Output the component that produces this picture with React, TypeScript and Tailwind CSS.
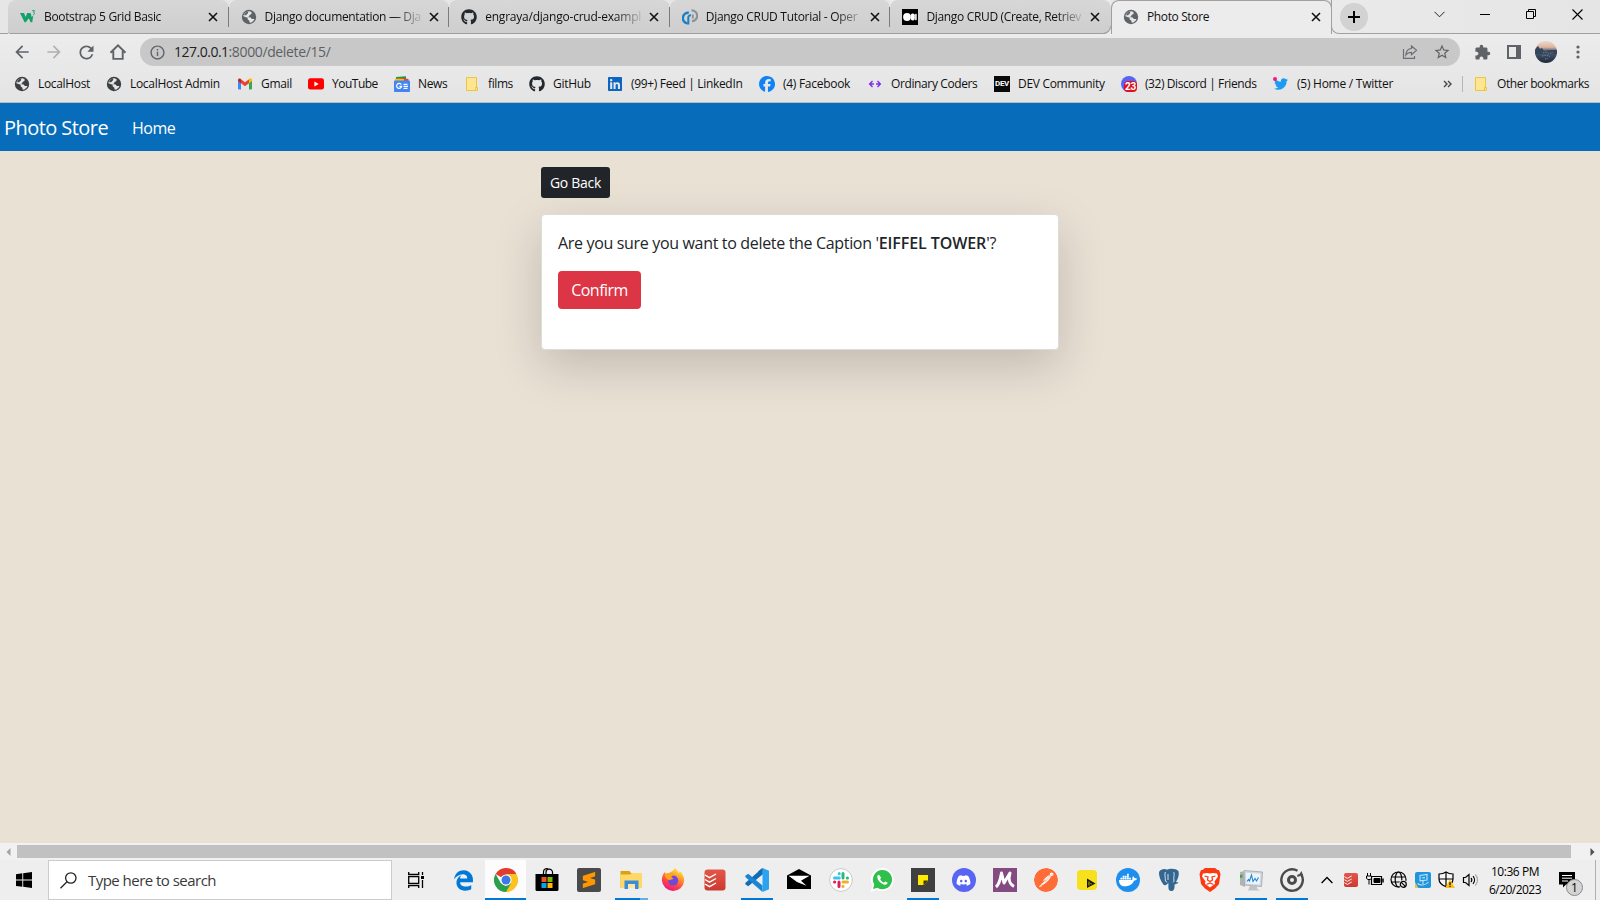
import React from "react";
import type { ReactNode } from "react";
import { FaGithub, FaDiscord, FaDocker, FaLinkedin, FaFacebook, FaTwitter, FaEdgeLegacy } from "react-icons/fa6";
import { MdExtension, MdStarBorder, MdInfoOutline, MdArrowBack, MdArrowForward, MdRefresh } from "react-icons/md";
import { SiPostman, SiSublimetext } from "react-icons/si";

/* ---------- small drawings ---------- */

const GlobeIcon = ({ color }: { color: string }) => (
  <svg width="16" height="16" viewBox="0 0 16 16">
    <circle cx="8" cy="8" r="7.200" fill={color} />
    <path d="M8.200 2.300L10.500 3v2L8.500 6l-.3 1.400-1.800.7 3.200.4 1.300 1.500h2.600c-.8 2-2.600 3.600-4.700 3.800l-.6-2.200-1.500-1.200V8.800L2.300 7.200C2.800 4.500 5.200 2.300 8.200 2.300z" fill="#e6e6e6" />
    <path d="M3 6.200C3.800 4 5.500 2.700 7.500 2.300L6.800 4.600 5 6.300z" fill={color} />
  </svg>
);

const W3Icon = () => (
  <svg width="16" height="16" viewBox="0 0 16 16" fill="#12a06b">
    <path d="M0 4h4l1.600 4L7.200 4h3.400l1.200 4.200 1.600-2.200-1.200 7.200h-1.600L8.800 9.200l-3 4H4.600z" />
    <path d="M12.200 1.600h2.400L13.400 3.200c1.600 0 1.600 2.400-.4 2.200" fill="none" stroke="#12a06b" strokeWidth=".9" />
  </svg>
);

const OpenReplayIcon = () => (
  <svg width="16" height="16" viewBox="0 0 16 16" fill="none">
    <path d="M9.500 1.400A5.200 5.200 0 1 1 10 12.200" stroke="#8b9198" strokeWidth="2.200" />
    <path d="M10.800 9.500V5.500" stroke="#8b9198" strokeWidth="1.800" />
    <path d="M6.800 3.800A5.300 5.300 0 0 0 5.600 14.400" stroke="#1c7fc7" strokeWidth="2.400" />
    <path d="M6.300 15.500V8.600C6.300 6.800 7.600 6.200 9 6.400" stroke="#1c7fc7" strokeWidth="2" />
  </svg>
);

const MediumIcon = () => (
  <svg width="16" height="16" viewBox="0 0 16 16">
    <rect width="16" height="16" fill="#000" />
    <circle cx="5" cy="8" r="3.900" fill="#fff" />
    <rect x="8.800" y="4.400" width="4" height="7.200" rx="1.800" fill="#fff" />
    <rect x="13" y="4.800" width="1.800" height="6.400" rx=".7" fill="#ddd" />
  </svg>
);

const GmailIcon = () => (
  <svg width="16" height="16" viewBox="0 0 16 16">
    <path d="M1 4v8.600c0 .5.4.9.9.9H4V6.800z" fill="#4285f4" />
    <path d="M12 6.800v6.700h2.100c.5 0 .9-.4.9-.9V4z" fill="#34a853" />
    <path d="M12 3.400v3.800l3-2.300V3.800c0-1.300-1.500-2-2.500-1.200z" fill="#fbbc04" />
    <path d="M4 7.200V3.200l4 3 4-3v4l-4 3z" fill="#ea4335" />
    <path d="M1 4v.9l3 2.300V3.200l-.5-.4C2.500 2 1 2.700 1 4z" fill="#c5221f" />
  </svg>
);

const YouTubeIcon = () => (
  <svg width="16" height="16" viewBox="0 0 16 16">
    <rect y="2.200" width="16" height="11.400" rx="2.400" fill="#f00" />
    <path d="M6.400 5.400v5l4.300-2.500z" fill="#fff" />
  </svg>
);

const NewsIcon = () => (
  <svg width="16" height="16" viewBox="0 0 16 16">
    <path d="M2 1l10-.8v3H2z" fill="#0c9d58" />
    <path d="M5 1.500l9.500 1.500v3H4z" fill="#ea4335" />
    <path d="M1 2.500l9 .5v3H1z" fill="#fbbc04" />
    <rect y="4.500" width="16" height="11.500" rx=".8" fill="#4285f4" />
    <path d="M7.300 8.600A2.500 2.500 0 1 0 7.600 10.400H5.400M9.500 8.300h4M9.500 10.300h4.500M9.500 12.300h4" fill="none" stroke="#fff" strokeWidth="1.200" />
  </svg>
);

const FolderIcon = () => (
  <svg width="16" height="16" viewBox="0 0 16 16">
    <path d="M2.500 1.500h10v9.500l1 1v2.500h-11z" fill="#fee591" stroke="#ecc63e" />
    <path d="M11.500 14v-2.500h2" fill="none" stroke="#ecc63e" />
  </svg>
);

const CodeArrowsIcon = () => (
  <svg width="16" height="16" viewBox="0 0 16 16" fill="none" stroke="#7c2bea" strokeWidth="1.300">
    <path d="M5.500 5L2.600 8l2.900 3M10.500 5l2.900 3-2.900 3M3 8h3.900M9.100 8H13" />
  </svg>
);

const DevIcon = () => (
  <span className="flex h-4 w-4 items-center justify-center bg-[#0a0a0a] font-['Roboto',sans-serif] text-[8px] leading-4 font-bold tracking-[-0.3px] text-white">
    DEV
  </span>
);

const DiscordBadgeIcon = () => (
  <span className="relative flex h-4 w-4 justify-center rounded-full bg-[#5865f2]">
    <span className="absolute top-[5px] left-[3px] flex h-[11px] w-[13px] items-center justify-center rounded-[4px] bg-[#e0101c] font-['Roboto',sans-serif] text-[10px] leading-[11px] font-bold tracking-[-0.3px] text-white">
      23
    </span>
  </span>
);

const TwitterBadgeIcon = () => (
  <span className="relative flex h-4 w-4 items-center justify-center">
    <FaTwitter size={14} color="#1d9bf0" />
    <span className="absolute top-[1px] left-0 h-1 w-1 rounded-full bg-[#f5197f]" />
  </span>
);

const HomeIcon = () => (
  <svg width="18" height="18" viewBox="0 0 18 18" fill="none" stroke="#5f6368" strokeWidth="1.900">
    <path d="M1.500 9.700L9 2.300l7.500 7.400M4.300 8v7.900h9.400V8" />
  </svg>
);

const ShareIcon = () => (
  <svg width="16" height="16" viewBox="0 0 16 16" fill="none" stroke="#6b6f73" strokeWidth="1.200">
    <path d="M1.500 5v9.400h11V12M9.500 2l5 4.300-5 4.300V8.300C6.500 8.300 5 9.300 3.800 11c.3-3.500 2.200-6.200 5.700-6.500z" />
  </svg>
);

const Avatar = () => (
  <svg width="22" height="22" viewBox="0 0 22 22">
    <defs>
      <linearGradient id="sky" x1="0" y1="0" x2="0" y2="1">
        <stop offset="0" stopColor="#e9d9d2" />
        <stop offset=".28" stopColor="#e2b49c" />
        <stop offset=".45" stopColor="#4d6078" />
        <stop offset="1" stopColor="#20293a" />
      </linearGradient>
      <clipPath id="round"><circle cx="11" cy="11" r="11" /></clipPath>
    </defs>
    <g clipPath="url(#round)">
      <rect width="22" height="22" fill="url(#sky)" />
      <path d="M0 8l3-3 2 3 2-1 2 3 6-1 7 0v4H0z" fill="#34465e" />
      <path d="M8 12l3-1 3 1.500 4-1M7 15l4-1 4 1.500M10 18l3-.5" stroke="#7f90a4" strokeWidth=".8" strokeDasharray="1.500 1" fill="none" />
    </g>
  </svg>
);

const ChromeIcon = () => (
  <svg width="24" height="24" viewBox="0 0 24 24">
    <path d="M12 12L1.600 6A12 12 0 0 1 22.400 6z" fill="#e33b2e" />
    <path d="M12 12L22.400 6A12 12 0 0 1 12 24z" fill="#fcc31e" />
    <path d="M1.600 6L6.800 15 12 18l5.200-3L12 24A12 12 0 0 1 1.600 6z" fill="#2b9f49" />
    <path d="M12 6h10.400L17.200 15z" fill="#fcc31e" />
    <circle cx="12" cy="12" r="5.600" fill="#fff" />
    <circle cx="12" cy="12" r="4.500" fill="#3b79e8" />
  </svg>
);

const StoreIcon = () => (
  <svg width="24" height="24" viewBox="0 0 24 24">
    <path d="M8.500 6V4a3.200 3.200 0 0 1 5-2.800A3.200 3.200 0 0 1 17.500 4v2M11 6V4.500A3.200 3.200 0 0 1 13.500 1.200" fill="none" stroke="#000" strokeWidth="1.200" />
    <path d="M.500 6h23v15.500a1.500 1.500 0 0 1-1.500 1.500H2a1.500 1.500 0 0 1-1.500-1.500z" fill="#000" />
    <path d="M6.500 9h5v5h-5z" fill="#f25022" />
    <path d="M12.500 9h5v5h-5z" fill="#7fba00" />
    <path d="M6.500 15h5v5h-5z" fill="#00a4ef" />
    <path d="M12.500 15h5v5h-5z" fill="#ffb900" />
  </svg>
);

const ExplorerIcon = () => (
  <svg width="24" height="24" viewBox="0 0 24 24">
    <path d="M1.500 3h9l1.500 2H22a1 1 0 0 1 1 1v14H1.500z" fill="#dda10f" />
    <path d="M1.500 6.500h9.500l2-1.500h10v15h-21.500z" fill="#ffd968" />
    <path d="M5.500 12.500h14v8.500h-3.500v-5h-7v5H5.500z" fill="#3a8dd8" />
    <path d="M9 16h7v4H9z" fill="#fbe6a4" />
  </svg>
);

const FirefoxIcon = () => (
  <svg width="24" height="24" viewBox="0 0 24 24">
    <defs>
      <linearGradient id="ff" x1=".8" y1="0" x2=".3" y2="1">
        <stop offset="0" stopColor="#fff44f" />
        <stop offset=".35" stopColor="#ffa02a" />
        <stop offset=".7" stopColor="#ff3f4b" />
        <stop offset="1" stopColor="#e01b88" />
      </linearGradient>
    </defs>
    <path d="M14 0c2 1.500 3.200 3.300 3.500 5 1-.3 1.200-1.500 1.100-2.300C21.700 5.500 23.400 9 23.200 13A11.200 11.200 0 0 1 .9 12.500C.8 8.800 2 6 4 3.800c0 1 .2 1.600.6 2.100 1-.6 2.300-.8 3.400-.6C9 4.200 10 3.600 11 3.400 11.800 2.500 13.200 1.500 14 0z" fill="url(#ff)" />
    <circle cx="12.200" cy="12.600" r="5" fill="#7147d6" />
    <path d="M4 5.700C6 4.800 8.500 5 9.600 6.200c1 .1 2.400.4 3.400 1.300-1.600 0-2.500.8-2.800 1.700 1 .3 1.900.9 2.300 1.800-1.600.6-3 .2-4.200 1.200-2.200-1.600-4.800-2-4.300-6.500z" fill="#ffa31a" />
  </svg>
);

const TodoistIcon = ({ size }: { size: number }) => (
  <svg width={size} height={size} viewBox="0 0 24 24">
    <defs>
      <linearGradient id="todo" x1="0" y1="0" x2="0" y2="1">
        <stop offset="0" stopColor="#e3564a" />
        <stop offset="1" stopColor="#cb3a30" />
      </linearGradient>
    </defs>
    <rect x="1.500" y="1.500" width="21" height="21" rx="3" fill="url(#todo)" />
    <path d="M2 7l4.500 2.600L13 6M2 11.500l4.500 2.600L13 10.500M2 16l4.500 2.600 6.500-3.600" fill="none" stroke="#fff" strokeWidth="1.400" />
  </svg>
);

const VsCodeIcon = () => (
  <svg width="24" height="24" viewBox="0 0 24 24">
    <path d="M17.500 0v6.500L3.200 18.300.300 16.200V15z" fill="#0f6cb8" />
    <path d="M17.500 24v-6.500L3.200 5.700.300 7.800V9z" fill="#1a85d3" />
    <path d="M17.500 0L24 2.800v18.400L17.500 24z" fill="#2ba3ee" />
    <path d="M17.500 0L13 3.600l4.500 3z" fill="#0f6cb8" />
  </svg>
);

const MailIcon = () => (
  <svg width="24" height="20" viewBox="0 0 24 20">
    <path d="M0 6.500L12 0l12 6.500V20H0z" fill="#000" />
    <path d="M1.500 6.700h21l-8.500 5 5.500 5L10 13z" fill="#fff" />
  </svg>
);

const SlackIcon = () => (
  <svg width="24" height="24" viewBox="0 0 24 24" strokeLinecap="round" strokeWidth="3">
    <circle cx="12" cy="12" r="11.400" fill="#fff" stroke="#c9c9c9" strokeWidth="1" />
    <path d="M10.200 5.500v.2M5.500 10h4.700" stroke="#36c5f0" />
    <path d="M14 5.500V10M18.500 10h-.2" stroke="#2eb67d" />
    <path d="M14 14h4.500M14 18.500v-.2" stroke="#ecb22e" />
    <path d="M10 14v4.500M5.700 14h-.2" stroke="#e01e5a" />
  </svg>
);

const WhatsAppIcon = () => (
  <svg width="24" height="24" viewBox="0 0 24 24">
    <path d="M12.500 0A11.500 11.500 0 1 1 7 21.800L.500 24l2-6.600A11.500 11.500 0 0 1 12.500 0z" fill="#fff" />
    <path d="M12.500 2A9.600 9.600 0 1 1 7.300 19.700L3 21l1.300-4.400A9.600 9.600 0 0 1 12.500 2z" fill="#2fbf4b" />
    <path d="M9 6.800c-1.200 0-2 1.300-1.700 2.800.7 3.500 4 6.700 7.700 7.200 1.500.1 2.700-1 2.600-2.200L15.200 13.400l-1.300 1.400c-1.800-.7-3-1.900-3.800-3.700L11.200 9.700z" fill="#fff" />
  </svg>
);

const NotesIcon = () => (
  <svg width="24" height="24" viewBox="0 0 24 24">
    <path d="M0 0h24v24H0z" fill="#404040" />
    <path d="M7 7h10v6l-4 4H7z" fill="#ffe900" />
    <path d="M12.500 12.500H17V13l-4 4h-.5z" fill="#403a08" />
  </svg>
);

const ScriptMIcon = () => (
  <svg width="24" height="24" viewBox="0 0 24 24">
    <path d="M0 0h24v24H0z" fill="#844a82" />
    <path d="M3 19C5.500 17 7.500 11 8.500 5L11 15l6-10C15.500 10 16 16 21 18.500" fill="none" stroke="#fff" strokeWidth="3" strokeLinejoin="round" />
  </svg>
);

const YellowPlayIcon = () => (
  <svg width="24" height="24" viewBox="0 0 24 24">
    <rect x="2" y="2" width="20" height="20" rx="4" fill="#f7e01e" />
    <path d="M12 10.500v9.500l8.500-4.500z" fill="#181500" />
    <path d="M14 13.500v4M16 15v1.500" stroke="#f7e01e" strokeWidth=".8" />
  </svg>
);

const ElephantIcon = () => (
  <svg width="24" height="24" viewBox="0 0 24 24" fill="#336791">
    <path d="M2 4c2-3 5.500-3.500 8-2.300C13 .3 19 .2 21.500 3.200c1 4-.8 8-2.500 11h2.500c-.8 1.500-2.500 2-3.900 2-.1 3 .2 6-2.600 6.800-2.500.5-3.500-1-3.600-3.500V15c-1.600 2-3.800 3.200-5.400 1C3.500 12.500 1.700 8 2 4z" />
    <path d="M8.300 4c-1 3 .3 6 .1 9l1.800 1.300M16.800 4.200c1 3-.6 5 .2 9l-1 1.200M11 6v6" fill="none" stroke="#e6edf3" strokeWidth=".9" />
  </svg>
);

const BraveIcon = () => (
  <svg width="22" height="24" viewBox="0 0 22 24">
    <path d="M6 0h10l2.500 2H20l1.500 4L20 16l-4 4.500L11 24l-5-3.500L2 16 .500 6 2 2h1.500z" fill="#fb3a12" />
    <path d="M4 5.500l4-.5 3 .6 3-.6 4 .5 1 3-3.500 5 .5 2.500-3 2-2 1.500-2-1.500-3-2 .5-2.500L3 8.500z" fill="#fff" />
    <path d="M5.500 8l3.500 1-.5 3 2.500 1.500 2.500-1.500-.5-3 3.500-1M7.500 16.500L11 15l3.500 1.500" fill="none" stroke="#fb3a12" strokeWidth="1.300" />
  </svg>
);

const MonitorIcon = () => (
  <svg width="24" height="24" viewBox="0 0 24 24">
    <path d="M1 4l5-1V19l-5-2z" fill="#aeb3b6" />
    <path d="M1 7l2.500-.5v3L1 10z" fill="#46a33c" />
    <path d="M5 2.500l18.500 1.500-1 14.500-17-1.500z" fill="#d3d6d8" stroke="#a2a6a9" strokeWidth=".8" />
    <path d="M7 4.700l14.500 1-.8 10.800L7.200 15.500z" fill="#e9f5ff" />
    <path d="M8 13.500l1.500-2 1 1.500 2-6 1.500 6.500 2-3 1.500 2.500 2-3.500" fill="none" stroke="#2584cf" strokeWidth="1.100" />
    <path d="M11 17.800h7v3l3 1.700H9z" fill="#bfc3c5" />
  </svg>
);

const GrooveIcon = () => (
  <svg width="24" height="24" viewBox="0 0 24 24" fill="none" stroke="#4b4b4b">
    <path d="M21.500 7A10.700 10.700 0 1 1 17.500 2.800" strokeWidth="2.400" />
    <circle cx="12" cy="12" r="3.500" strokeWidth="3" />
    <path d="M17.300 7.600c1.400.2 3-.5 3.900-2.100L22.300 8" strokeWidth="2.200" />
  </svg>
);

const BatteryIcon = () => (
  <svg width="18" height="14" viewBox="0 0 18 14" fill="none" stroke="#000">
    <path d="M5.500 3.500h10v8h-10z" strokeWidth="1.200" />
    <path d="M8 5.500h6v4H8z" fill="#000" />
    <path d="M17 5.500v4" strokeWidth="1.500" />
    <path d="M1.500 0v3M4.500 0v3M.500 3h5v2.500l-1.500 1h-2L.500 5.500zM3 6.500v5" fill="#eee" />
  </svg>
);

const GlobeOffIcon = () => (
  <svg width="18" height="18" viewBox="0 0 18 18" fill="none" stroke="#000" strokeWidth="1.200">
    <circle cx="8.500" cy="8.500" r="7.500" />
    <ellipse cx="8.500" cy="8.500" rx="3.300" ry="7.500" />
    <path d="M1.500 6h14M1.500 11h14" />
    <circle cx="13.300" cy="13.300" r="4.300" fill="#eee" stroke="none" />
    <circle cx="13.300" cy="13.300" r="3" />
    <path d="M11.300 11.300l4 4" />
  </svg>
);

const BlueToolIcon = () => (
  <svg width="16" height="16" viewBox="0 0 16 16" fill="none">
    <rect width="16" height="16" rx="2" fill="#2094dc" />
    <path d="M5 3.500l7-1v5.500l-7 .8zM7 6l3-.4M2.500 11.500c3 2.500 8 2 11-1.500M8 9v3" stroke="#bfe3fa" strokeWidth="1.100" />
    <path d="M0 10l3.500 6H1a1 1 0 0 1-1-1z" fill="#e3c06a" />
  </svg>
);

const ShieldIcon = () => (
  <svg width="18" height="18" viewBox="0 0 18 18">
    <path d="M8 1C6 2.400 3.500 3 1 3v5C1 11.700 4 14.200 8 15.700c4-1.500 7-4 7-7.700V3C12.500 3 10 2.400 8 1zM8 1v14M1 8h14" fill="#f7f7f7" stroke="#000" strokeWidth="1.200" />
    <path d="M12 8.500l5 8.500H7z" fill="#fdbf12" />
    <path d="M12 11.200v3M12 15v1" stroke="#000" strokeWidth="1.200" />
  </svg>
);

const SpeakerIcon = () => (
  <svg width="18" height="16" viewBox="0 0 18 16" fill="none" stroke="#000" strokeWidth="1.200">
    <path d="M1.500 5.500h2L7 2.500v11l-3.500-3h-2z" />
    <path d="M9 6c1 1.200 1 2.800 0 4M11 4.200c2 2.200 2 5.400 0 7.600" />
    <path d="M13.300 2.500c3 3 3 8 0 11" stroke="#aaa" />
  </svg>
);

/* ---------- browser: tab strip ---------- */

type Tab = { title: string; icon: ReactNode; tracking: string };

const tabs: Tab[] = [
  { title: "Bootstrap 5 Grid Basic", icon: <W3Icon />, tracking: "tracking-[-0.34px]" },
  { title: "Django documentation — Dja", icon: <GlobeIcon color="#5f6368" />, tracking: "tracking-[-0.34px]" },
  { title: "engraya/django-crud-exampl", icon: <FaGithub size={16} color="#24292f" />, tracking: "tracking-[-0.22px]" },
  { title: "Django CRUD Tutorial - Oper", icon: <OpenReplayIcon />, tracking: "tracking-[-0.3px]" },
  { title: "Django CRUD (Create, Retriev", icon: <MediumIcon />, tracking: "tracking-[-0.33px]" },
];

const TabClose = () => (
  <svg width="10" height="10" viewBox="0 0 10 10" stroke="#111" strokeWidth="1.600" className="shrink-0">
    <path d="M1 1l8 8M9 1L1 9" />
  </svg>
);

function InactiveTab({ tab, first, last }: { tab: Tab; first: boolean; last: boolean }) {
  return (
    <div className={last ? "relative flex h-[34px] w-[220.600px] bg-[#ececec]" : "relative flex h-[34px] w-[220.600px]"}>
      <div
        className={
          "flex min-w-0 flex-1 items-center rounded-t-lg border-b border-[#a0a0a0] bg-linear-to-b from-[#d7d7d7] to-[#cecece] pl-[12px]" +
          (last ? " rounded-br-lg" : "") +
          (first ? " rounded-bl-[3px]" : "")
        }
      >
        <span className="flex h-4 w-4 items-center justify-center">{tab.icon}</span>
        <span
          className={
            "ml-2 w-[160px] leading-[18px] whitespace-nowrap [mask-image:linear-gradient(to_right,#000_130px,transparent_160px)] " +
            tab.tracking
          }
        >
          {tab.title}
        </span>
        <span className="ml-1 flex"><TabClose /></span>
      </div>
      {last ? (
        <span className="absolute right-0 bottom-0 h-2 w-2 rounded-br-lg border-r border-b border-[#a0a0a0]" />
      ) : (
        <span className="absolute top-[7px] right-0 h-5 w-px bg-[#7c7c7c]" />
      )}
    </div>
  );
}

function TabStrip() {
  return (
    <div className="flex h-[34px] bg-[#e6e6e6]">
      <div className="w-2 border-b border-[#a0a0a0]" />
      {tabs.map((t, i) => (
        <InactiveTab key={t.title} tab={t} first={i === 0} last={i === tabs.length - 1} />
      ))}
      <div className="flex w-[221px] items-center rounded-t-lg border-x border-t border-[#a0a0a0] bg-[#ececec] pb-px pl-[11px]">
        <span className="flex h-4 w-4 items-center justify-center"><GlobeIcon color="#5f6368" /></span>
        <span className="ml-2 w-[159px] leading-[18px] tracking-[-0.37px]">Photo Store</span>
        <span className="ml-[5px] flex"><TabClose /></span>
      </div>
      <div className="flex flex-1 bg-[#ececec]">
        <div className="-ml-px flex flex-1 rounded-bl-lg border-b border-l border-[#a0a0a0] bg-linear-to-r from-[#eaeaea] to-[#e5e5e5]">
          <div className="mt-[3px] ml-2 flex h-7 w-7 items-center justify-center rounded-full bg-[#d2d2d2]">
            <svg width="12" height="12" viewBox="0 0 12 12" stroke="#000" strokeWidth="2"><path d="M6 0v12M0 6h12" /></svg>
          </div>
          <div className="ml-auto flex h-7">
            <span className="flex w-[46px] items-center justify-center">
              <svg width="11" height="7" viewBox="0 0 11 7" fill="none" stroke="#222"><path d="M.500 .800l5 5 5-5" /></svg>
            </span>
            <span className="flex w-[46px] items-center justify-center"><span className="h-px w-[10px] bg-black" /></span>
            <span className="flex w-[46px] items-center justify-center">
              <svg width="10" height="10" viewBox="0 0 10 10" fill="none" stroke="#000"><path d="M.500 2.500h7v7h-7zM2.500 2.500v-2h7v7h-2" /></svg>
            </span>
            <span className="flex w-[46px] items-center justify-center">
              <svg width="11" height="11" viewBox="0 0 11 11" stroke="#000" strokeWidth="1.100"><path d="M.500 .500l10 10M10.500 .500l-10 10" /></svg>
            </span>
          </div>
        </div>
      </div>
    </div>
  );
}

/* ---------- browser: toolbar ---------- */

const Slot = ({ children }: { children: ReactNode }) => (
  <span className="flex w-8 shrink-0 items-center justify-center">{children}</span>
);

function Toolbar() {
  return (
    <div className="flex h-9 items-center bg-linear-to-b from-[#ececec] to-[#e8e8e8] pl-[6px]">
      <Slot><MdArrowBack size={20} color="#5f6368" /></Slot>
      <Slot><MdArrowForward size={20} color="#b1b1b1" /></Slot>
      <Slot><MdRefresh size={21} color="#5f6368" /></Slot>
      <Slot><HomeIcon /></Slot>
      <div className="ml-[6px] flex h-7 w-[1320px] items-center rounded-full bg-[#c8c8c8] pr-[2px] pl-[9px]">
        <MdInfoOutline size={17} color="#5f6368" />
        <span className="ml-2 text-[14px] leading-5 tracking-[-0.370px] text-[#5c5f63]">
          <span className="tracking-[-0.500px] text-[#222]">127.0.0.1</span>:8000/delete/15/
        </span>
        <span className="ml-auto flex">
          <Slot><ShareIcon /></Slot>
          <Slot><MdStarBorder size={18} color="#5f6368" /></Slot>
        </span>
      </div>
      <div className="ml-[6px] flex">
        <Slot><MdExtension size={17} color="#5f6368" /></Slot>
        <Slot>
          <svg width="14" height="14" viewBox="0 0 14 14"><path d="M1 1h12v12H1z" fill="none" stroke="#5f6368" strokeWidth="2" /><path d="M9 0h5v14H9z" fill="#5f6368" /></svg>
        </Slot>
        <Slot><Avatar /></Slot>
        <Slot>
          <svg width="4" height="14" viewBox="0 0 4 14" fill="#5f6368"><circle cx="2" cy="2" r="1.600" /><circle cx="2" cy="7" r="1.600" /><circle cx="2" cy="12" r="1.600" /></svg>
        </Slot>
      </div>
    </div>
  );
}

/* ---------- browser: bookmarks ---------- */

type Bookmark = { label: string; icon: ReactNode; fit: string };

const bookmarks: Bookmark[] = [
  { label: "LocalHost", icon: <GlobeIcon color="#3c4043" />, fit: "w-[52px] tracking-[-0.33px]" },
  { label: "LocalHost Admin", icon: <GlobeIcon color="#3c4043" />, fit: "w-[91px] tracking-[-0.31px]" },
  { label: "Gmail", icon: <GmailIcon />, fit: "w-[31px] tracking-[-0.3px]" },
  { label: "YouTube", icon: <YouTubeIcon />, fit: "w-[46px] tracking-[-0.5px]" },
  { label: "News", icon: <NewsIcon />, fit: "w-[30px] tracking-[-0.35px]" },
  { label: "films", icon: <FolderIcon />, fit: "w-[25px] tracking-[-0.4px]" },
  { label: "GitHub", icon: <FaGithub size={16} color="#24292f" />, fit: "w-[38px] tracking-[-0.3px]" },
  { label: "(99+) Feed | LinkedIn", icon: <FaLinkedin size={16} color="#0a66c2" />, fit: "w-[112px] tracking-[-0.33px]" },
  { label: "(4) Facebook", icon: <FaFacebook size={16} color="#0f82f5" />, fit: "w-[68px] tracking-[-0.28px]" },
  { label: "Ordinary Coders", icon: <CodeArrowsIcon />, fit: "w-[87px] tracking-[-0.38px]" },
  { label: "DEV Community", icon: <DevIcon />, fit: "w-[87px] tracking-[-0.3px]" },
  { label: "(32) Discord | Friends", icon: <DiscordBadgeIcon />, fit: "w-[112px] tracking-[-0.42px]" },
  { label: "(5) Home / Twitter", icon: <TwitterBadgeIcon />, fit: "w-[97px] tracking-[-0.25px]" },
];

const BookmarkItem = ({ b }: { b: Bookmark }) => (
  <span className="flex shrink-0 items-center gap-2">
    <span className="flex h-4 w-4 items-center justify-center">{b.icon}</span>
    <span className={"leading-[18px] whitespace-nowrap " + b.fit}>{b.label}</span>
  </span>
);

function BookmarksBar() {
  return (
    <div className="flex h-[33px] items-center gap-4 border-b border-[#bdbdbd] bg-linear-to-b from-[#e8e8e8] to-[#e4e4e4] pr-[11px] pb-1 pl-[14px]">
      {bookmarks.map((b) => <BookmarkItem key={b.label} b={b} />)}
      <span className="ml-auto flex items-center">
        <svg width="9" height="8" viewBox="0 0 9 8" fill="none" stroke="#444" strokeWidth="1.400"><path d="M1 1l3 3-3 3M5 1l3 3-3 3" /></svg>
        <span className="mr-[10px] ml-[10px] h-4 w-px bg-[#b5b5b5]" />
        <BookmarkItem b={{ label: "Other bookmarks", icon: <FolderIcon />, fit: "w-[92px] tracking-[-0.43px]" }} />
      </span>
    </div>
  );
}

/* ---------- page ---------- */

function PageContent() {
  return (
    <div className="flex flex-1 flex-col bg-[#eae1d5]">
      <nav className="flex h-12 items-center bg-[#076dbb] pt-px pl-1 text-white">
        <span className="w-[128px] text-[20px] leading-7 tracking-[-0.560px]">Photo Store</span>
        <span className="text-[16px] leading-6 tracking-[-0.500px]">Home</span>
      </nav>
      <main className="mx-auto flex w-[518px] flex-col items-start pt-4">
        <button className="mb-4 h-[31px] w-[69px] rounded-[3px] bg-[#212529] text-[14px] leading-[21px] tracking-[-0.300px] text-white">Go Back</button>
        <section className="h-[136px] w-full rounded border border-[#dcdcdc] bg-white p-4 text-[16px] leading-6 text-[#212529] shadow-[0_16px_48px_rgba(0,0,0,0.175)]">
          <p className="mb-4 tracking-[-0.330px] whitespace-nowrap">
            Are you sure you want to delete the Caption '
            <b className="font-semibold tracking-[-0.080px]">EIFFEL TOWER</b>'?
          </p>
          <button className="h-[38px] w-[83px] rounded bg-[#dc3545] tracking-[-0.550px] text-white">Confirm</button>
        </section>
      </main>
    </div>
  );
}

function HorizontalScrollbar() {
  return (
    <div className="flex h-[17px] items-center bg-[#f1f1f1]">
      <span className="flex w-[17px] justify-center">
        <svg width="5" height="8" viewBox="0 0 5 8" fill="#a3a3a3"><path d="M4.500 0v8L.500 4z" /></svg>
      </span>
      <span className="h-[13px] w-[1554px] bg-[#c1c1c1]" />
      <span className="ml-auto flex w-4 justify-center">
        <svg width="5" height="8" viewBox="0 0 5 8" fill="#505050"><path d="M.500 0v8l4-4z" /></svg>
      </span>
    </div>
  );
}

/* ---------- desktop taskbar ---------- */

type TaskApp = { name: string; icon: ReactNode; open?: "wide" | "normal" | "stack"; current?: boolean };

const Disc = ({ color, children }: { color: string; children: ReactNode }) => (
  <span className={"flex h-6 w-6 items-center justify-center rounded-full " + color}>{children}</span>
);

const pinned: TaskApp[] = [
  { name: "edge", icon: <FaEdgeLegacy size={21} color="#0078d7" /> },
  { name: "chrome", icon: <ChromeIcon />, open: "wide", current: true },
  { name: "store", icon: <StoreIcon /> },
  { name: "sublime", icon: <span className="flex h-6 w-6 items-center justify-center rounded-[2px] bg-[#4a4a4a]"><SiSublimetext size={16} color="#ff9800" /></span> },
  { name: "explorer", icon: <ExplorerIcon />, open: "stack" },
  { name: "firefox", icon: <FirefoxIcon /> },
  { name: "todoist", icon: <TodoistIcon size={24} /> },
  { name: "code", icon: <VsCodeIcon />, open: "normal" },
  { name: "mail", icon: <span className="mb-[3px] flex"><MailIcon /></span> },
  { name: "slack", icon: <SlackIcon /> },
];

const pinnedMore: TaskApp[] = [
  { name: "whatsapp", icon: <WhatsAppIcon /> },
  { name: "notes", icon: <NotesIcon />, open: "normal" },
  { name: "discord", icon: <Disc color="bg-[#5865f2]"><FaDiscord size={15} color="#fff" /></Disc> },
  { name: "script", icon: <ScriptMIcon /> },
  { name: "postman", icon: <SiPostman size={24} color="#ff6c37" className="rounded-full bg-white" /> },
  { name: "player", icon: <YellowPlayIcon /> },
  { name: "docker", icon: <Disc color="bg-[#1d8fee]"><FaDocker size={18} color="#fff" /></Disc> },
  { name: "postgres", icon: <ElephantIcon /> },
  { name: "brave", icon: <BraveIcon /> },
  { name: "monitor", icon: <MonitorIcon />, open: "normal" },
  { name: "groove", icon: <GrooveIcon />, open: "normal" },
];

function TaskButton({ app, width }: { app: TaskApp; width: string }) {
  return (
    <div className={"flex h-10 flex-col items-center justify-between " + width + (app.current ? " bg-[#fcfcfc]" : "")}>
      <span className="flex h-[38px] items-center pt-[2px]">{app.icon}</span>
      {app.open === "wide" && <span className="h-[2px] w-full bg-[#0078d7]" />}
      {app.open === "normal" && <span className="h-[2px] w-8 bg-[#0078d7]" />}
      {app.open === "stack" && (
        <span className="flex h-[2px] w-[33px]"><span className="flex-1 bg-[#0078d7]" /><span className="w-2 bg-[#66aee7]" /></span>
      )}
    </div>
  );
}

const tray: [string, ReactNode][] = [
  ["more", <svg width="12" height="8" viewBox="0 0 12 8" fill="none" stroke="#000" strokeWidth="1.300"><path d="M.600 7L6 1.500 11.400 7" /></svg>],
  ["todoist", <TodoistIcon size={16} />],
  ["battery", <BatteryIcon />],
  ["network", <GlobeOffIcon />],
  ["tool", <BlueToolIcon />],
  ["shield", <ShieldIcon />],
  ["sound", <SpeakerIcon />],
];

function Taskbar() {
  return (
    <div className="flex h-10 bg-[#eeeeee]">
      <span className="flex w-12 items-center justify-center">
        <svg width="16" height="16" viewBox="0 0 16 16" fill="#000"><path d="M0 2.200L6.300 1.300V7.600H0zM7.200 1.200L16 0V7.600H7.200zM0 8.500h6.300v6.300L0 13.900zM7.200 8.500H16V16l-8.800-1.200z" /></svg>
      </span>
      <div className="flex w-[344px] items-center border border-[#cccccc] bg-white pl-[11px]">
        <svg width="17" height="17" viewBox="0 0 17 17" fill="none" stroke="#222" strokeWidth="1.300"><circle cx="10.800" cy="6" r="5.200" /><path d="M7 9.800L.500 16.300" /></svg>
        <span className="ml-[11px] text-[15px] leading-5 tracking-[-0.530px] text-[#3a3a3a]">Type here to search</span>
      </div>
      <span className="flex w-[50px] items-center pl-4">
        <svg width="16" height="16" viewBox="0 0 16 16" fill="none" stroke="#000" strokeWidth="1.300"><path d="M.700 0v2.500h10V0M.700 4.700h10v6.600H.700zM.700 16v-2.500h10V16M14.500 0v3M14.500 8v8" /><path d="M13 4h3v3h-3z" fill="#000" stroke="none" /></svg>
      </span>
      {pinned.map((a) => (
        <TaskButton key={a.name} app={a} width={a.current ? "w-[41px]" : a.name === "edge" ? "w-[43px]" : "w-[42px]"} />
      ))}
      <div className="flex">
        {pinnedMore.map((a) => <TaskButton key={a.name} app={a} width={a.name === "whatsapp" ? "w-10" : "w-[41px]"} />)}
      </div>
      <div className="ml-[3px] flex">
        {tray.map(([name, icon]) => <span key={name} className="flex w-6 items-center justify-center">{icon}</span>)}
      </div>
      <div className="flex w-16 flex-col items-center pt-[3px] text-[12px] leading-[18px] text-black">
        <span className="tracking-[-0.460px]">10:36 PM</span>
        <span className="tracking-[-0.530px]">6/20/2023</span>
      </div>
      <div className="relative flex w-[49px] border-r border-[#b0b0b0] pt-3 pl-3">
        <svg width="16" height="16" viewBox="0 0 16 16"><path d="M0 0h16v12.500H7L4 15.500v-3H0z" fill="#000" /><path d="M3 3.500h10M3 6.200h10M3 9h6" stroke="#fff" /></svg>
        <span className="absolute top-[19px] left-[19px] flex h-[17px] w-[17px] items-center justify-center rounded-full border border-[#8a8a8a] bg-[#d4d4d4] text-[12px] leading-4 text-black">1</span>
      </div>
    </div>
  );
}

export default function App() {
  return (
    <div className="flex h-[900px] w-[1600px] flex-col overflow-hidden font-['Open_Sans','Noto_Sans',sans-serif] text-[12px] leading-none text-[#111]">
      <TabStrip />
      <Toolbar />
      <BookmarksBar />
      <PageContent />
      <HorizontalScrollbar />
      <Taskbar />
    </div>
  );
}
